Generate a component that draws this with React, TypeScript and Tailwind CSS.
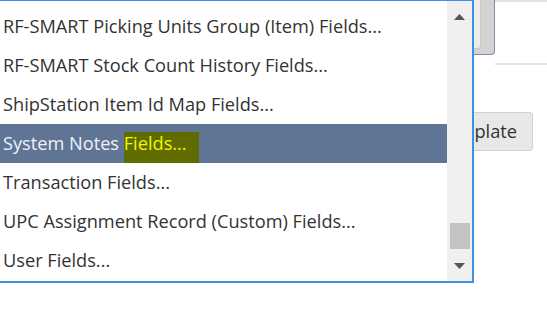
import React from "react";

const rows = [
  "RF-SMART Picking Units Group (Item) Fields...",
  "RF-SMART Stock Count History Fields...",
  "ShipStation Item Id Map Fields...",
  "__SELECTED__",
  "Transaction Fields...",
  "UPC Assignment Record (Custom) Fields...",
  "User Fields...",
];

export default function App() {
  return (
    <div
      className="relative w-[547px] h-[317px] overflow-hidden bg-white"
      style={{ fontFamily: '"Open Sans", "Noto Sans", sans-serif' }}
    >
      {/* Background page content */}
      <div className="flex flex-col">
        <div className="flex h-[66px]">
          <div className="ml-[440px] w-[55px] h-[55px] bg-[#d3d3d3] border border-t-0 border-[#7d8ca3] rounded-br-[4px] flex justify-end">
            <div className="w-[21px] h-[49px] bg-[#ececec] border border-t-0 border-[#c8c8c8] rounded-br-[3px] mr-[13px]" />
          </div>
          <div className="flex-1 h-[65px] border-t-[2px] border-b-[2px] border-[#e3e3e3]" />
        </div>
        <div className="flex justify-end pr-[14px] mt-[46px]">
          <div className="h-[39px] pl-[12px] pr-[15px] flex items-center bg-[#e8e8e8] border border-[#d2d2d2] rounded-[3px] text-[18.2px] text-[#333]">
            Template
          </div>
        </div>
      </div>

      {/* Dropdown list overlay */}
      <div className="absolute left-0 top-0 w-[474px] h-[283px] flex bg-white border-t border-r-2 border-b-2 border-[#3f8fe6]">
        <div className="flex-1 overflow-hidden">
          <div className="mt-[6px] flex flex-col">
            {rows.map((r, i) =>
              r === "__SELECTED__" ? (
                <div
                  key={i}
                  className="h-[39px] flex items-center pl-[3px] bg-[#607595] text-[18.2px] text-[#eef2f7] whitespace-nowrap"
                >
                  <span>System Notes&nbsp;</span>
                  <span className="bg-[#606c00] text-[#f4f400] h-[31px] mt-[8px] pr-[12px] flex items-center pb-[8px]">
                    Fields...
                  </span>
                </div>
              ) : (
                <div
                  key={i}
                  className="h-[39px] flex items-center pl-[3px] text-[18.2px] text-[#333] whitespace-nowrap"
                >
                  {r}
                </div>
              )
            )}
          </div>
        </div>
        <div className="w-[25px] bg-[#f0f0f0] flex flex-col items-center">
          <svg className="mt-[13px]" width="11" height="6" viewBox="0 0 11 6">
            <polygon points="0,6 5.5,0 11,6" fill="#555" />
          </svg>
          <div className="mt-[203px] w-[20px] h-[26px] bg-[#c3c3c3]" />
          <svg className="mt-[14px]" width="11" height="6" viewBox="0 0 11 6">
            <polygon points="0,0 11,0 5.5,6" fill="#555" />
          </svg>
        </div>
      </div>
    </div>
  );
}
